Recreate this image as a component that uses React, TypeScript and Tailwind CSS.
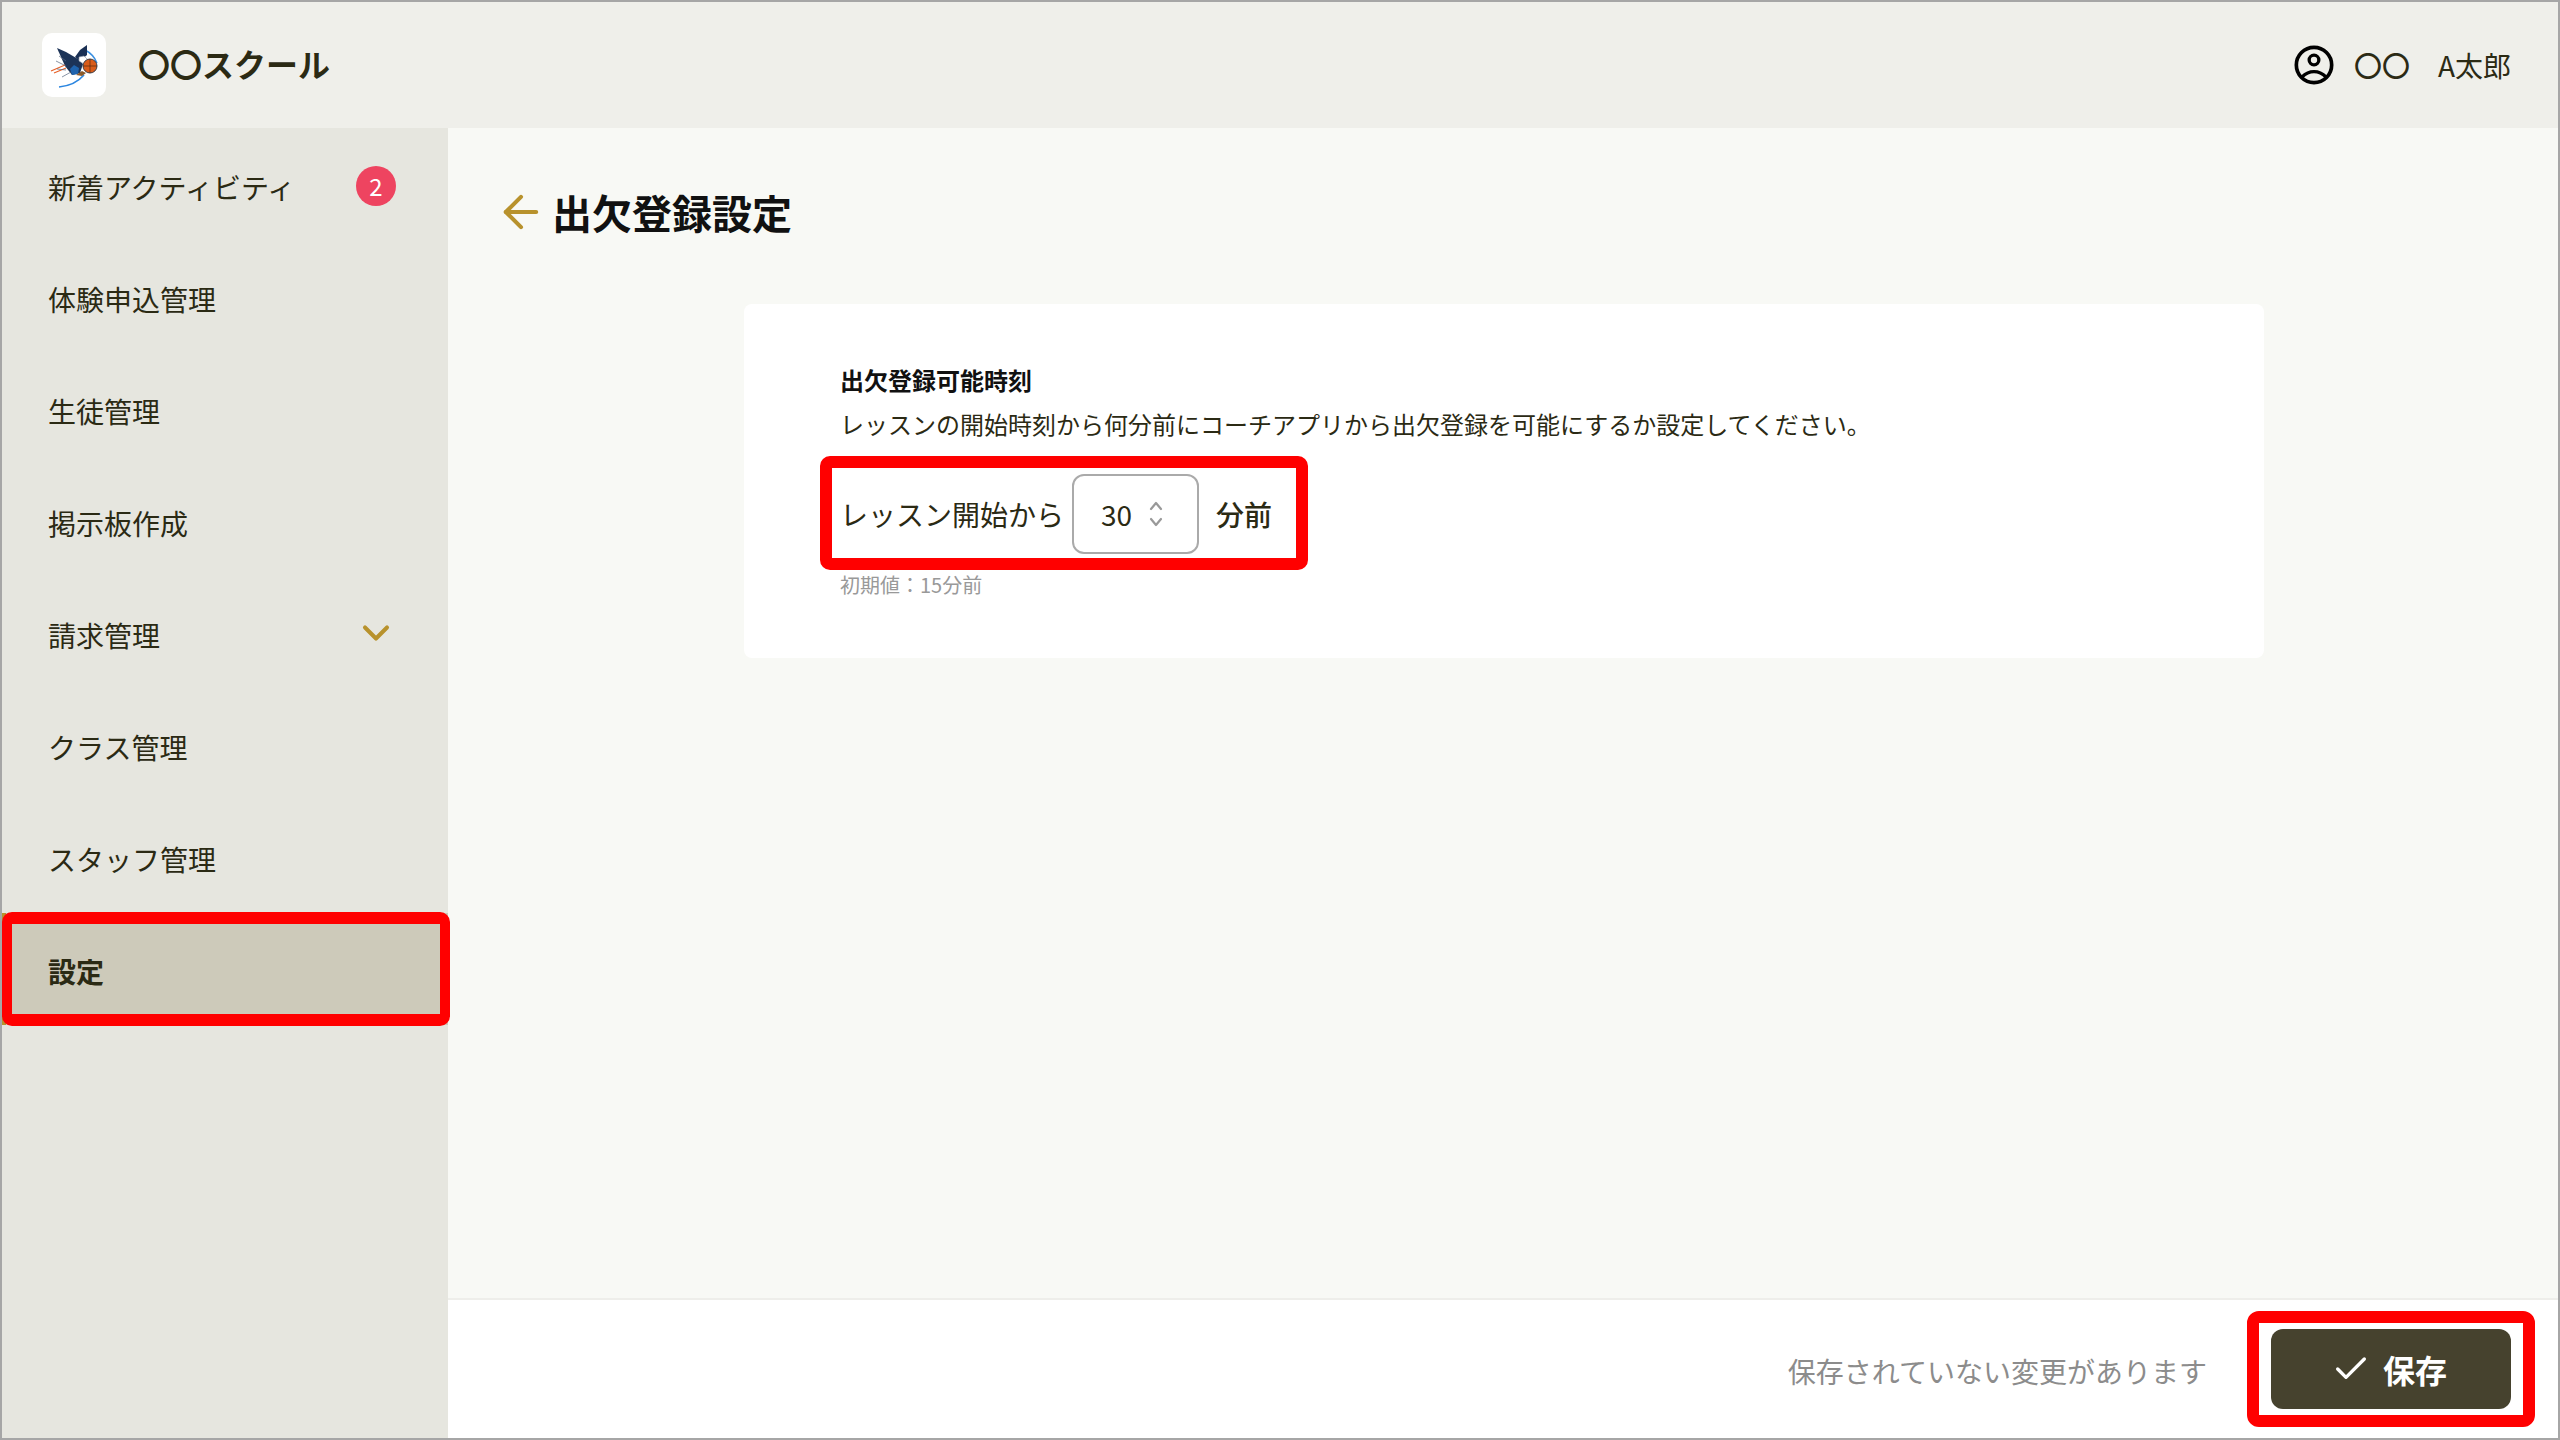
import { ArrowLeft, Check, ChevronDown } from "lucide-react";

const navItems = [
  { label: "新着アクティビティ", badge: 2 },
  { label: "体験申込管理" },
  { label: "生徒管理" },
  { label: "掲示板作成" },
  { label: "請求管理", chevron: true },
  { label: "クラス管理" },
  { label: "スタッフ管理" },
  { label: "設定", active: true },
];

function Logo() {
  return (
    <div className="h-16 w-16 shrink-0 rounded-[10px] bg-white">
      <svg viewBox="0 0 64 64" className="h-16 w-16">
        <path d="M43 17c6 3 10 8 12 13" fill="none" stroke="#3a8fe0" strokeWidth="1.4" />
        <path d="M15 15l9 4 12 7 5 5-3 9-8 2-7-9z" fill="#1c3357" />
        <path d="M33 24l5-7 7-5v10l-7 6z" fill="#1a3054" />
        <path d="M28 36l4-4 5 3-1 6-6 1z" fill="#1f63ad" />
        <path d="M37 24l5-1 4 4-4 4-5-3z" fill="#ffffff" stroke="#8a95a6" strokeWidth="0.6" />
        <circle cx="48" cy="33" r="7" fill="#d95c1a" stroke="#3b3f4a" strokeWidth="1" />
        <path d="M41 33h14M48 26v14" stroke="#5a2a10" strokeWidth="0.7" />
        <path d="M9 38l14-6M12 40l12-5" stroke="#e8622a" strokeWidth="1.2" />
        <path d="M17 54c10-1 19-5 25-12" fill="none" stroke="#2b86e0" strokeWidth="1.6" />
        <path d="M14 28l10 5M17 23l7 5M20 44l9-5M15 36l9 1" stroke="#56657e" strokeWidth="0.7" />
        <path d="M34 42l6 1 4-3-4-2z" fill="#8a5a2c" />
      </svg>
    </div>
  );
}

function UserIcon() {
  return (
    <svg viewBox="0 0 24 24" className="h-10 w-10 text-black" fill="none" stroke="currentColor">
      <circle cx="12" cy="12" r="10.6" strokeWidth="2.2" />
      <circle cx="12" cy="9" r="2.9" strokeWidth="2" />
      <path d="M4.800 19.200C7 17 9.500 16 12 16s5 1 7.200 3.200" strokeWidth="2" />
    </svg>
  );
}

function StepperIcon() {
  return (
    <svg viewBox="0 0 14 26" className="h-[26px] w-3.5 text-[#999999]" fill="none" stroke="currentColor" strokeWidth="2.2" strokeLinecap="round" strokeLinejoin="round">
      <path d="M2 8l5-6 5 6" />
      <path d="M2 18l5 6 5-6" />
    </svg>
  );
}

export default function App() {
  return (
    <div
      className="flex h-[1440px] w-[2560px] flex-col overflow-hidden border-2 border-[#a6a6a6] bg-[#f8f9f5] text-[#2b2a14]"
      style={{ fontFamily: '"Noto Sans CJK JP", sans-serif' }}
    >
      <header className="flex h-[126px] shrink-0 items-center justify-between bg-[#efefea] pl-10 pr-[47px]">
        <div className="flex items-center gap-8">
          <Logo />
          <span className="pb-1 text-[32px] font-bold leading-none">〇〇スクール</span>
        </div>
        <div className="flex items-center text-[28px] leading-none">
          <UserIcon />
          <span className="ml-5 font-medium">〇〇</span>
          <span className="ml-7">A太郎</span>
        </div>
      </header>

      <div className="flex min-h-0 flex-1">
        <nav className="w-[446px] shrink-0 bg-[#e6e6df] pt-px">
          {navItems.map((item) => (
            <div
              key={item.label}
              className={
                item.active
                  ? "relative flex h-[112px] items-center justify-between border-l-4 border-[#b8922c] bg-[#cdcaba] pl-[42px] pr-[50px] text-[28px] font-bold"
                  : "flex h-[112px] items-center justify-between pl-[46px] pr-[50px] text-[28px]"
              }
            >
              <span className="relative top-0.5">{item.label}</span>
              {item.badge && (
                <span className="mr-0.5 mt-0.5 flex h-10 w-10 items-center justify-center rounded-full bg-[#ee4460] text-2xl leading-none text-white">
                  {item.badge}
                </span>
              )}
              {item.chevron && <ChevronDown className="h-11 w-11 text-[#b8922c]" strokeWidth={2.2} />}
              {item.active && (
                <div className="absolute -bottom-px -left-1 -right-0.5 -top-px rounded-[10px] border-[12px] border-l-[10px] border-r-[10px] border-[#ff0000]" />
              )}
            </div>
          ))}
        </nav>

        <div className="flex min-w-0 flex-1 flex-col">
          <main className="min-h-0 flex-1 pl-[47px]">
            <div className="flex h-[176px] items-center gap-[5px] pb-2">
              <ArrowLeft className="h-[52px] w-[52px] text-[#b8922c]" strokeWidth={1.9} />
              <h1 className="text-[40px] font-bold leading-none text-[#111111]">出欠登録設定</h1>
            </div>

            <section className="ml-[249px] h-[354px] w-[1520px] rounded-lg bg-white pl-[96px] pt-[58px]">
              <h2 className="text-2xl font-bold leading-9 text-[#111111]">出欠登録可能時刻</h2>
              <p className="mt-2 text-2xl leading-9 text-[#2b2a14]">
                レッスンの開始時刻から何分前にコーチアプリから出欠登録を可能にするか設定してください。
              </p>
              <div className="relative mt-8 flex h-20 w-fit items-center text-[28px] leading-none">
                <span>レッスン開始から</span>
                <div className="ml-2 flex h-20 w-[127px] items-center gap-[17px] rounded-xl border-2 border-[#aaaaaa] pl-[27px]">
                  <span>30</span>
                  <StepperIcon />
                </div>
                <span className="ml-[17px] font-medium">分前</span>
                <div className="absolute -bottom-4 -left-5 -right-[36px] -top-[18px] rounded-[10px] border-[12px] border-[#ff0000]" />
              </div>
              <p className="mt-[17px] text-xl leading-7 text-[#999999]">初期値：15分前</p>
            </section>
          </main>

          <footer className="flex h-[140px] shrink-0 items-center justify-end border-t-2 border-[#eeeeea] bg-white pr-[47px]">
            <span className="mt-1 text-[28px] leading-none text-[#8c8c8c]">保存されていない変更があります</span>
            <div className="relative ml-[64px]">
              <button className="flex h-20 w-60 items-center justify-center gap-3 rounded-xl bg-[#46422e] pr-1 text-[32px] font-bold leading-none text-white">
                <Check className="h-10 w-10" strokeWidth={2} />
                保存
              </button>
              <div className="absolute -bottom-[18px] -left-6 -right-6 -top-[18px] rounded-[12px] border-[12px] border-[#ff0000]" />
            </div>
          </footer>
        </div>
      </div>
    </div>
  );
}
